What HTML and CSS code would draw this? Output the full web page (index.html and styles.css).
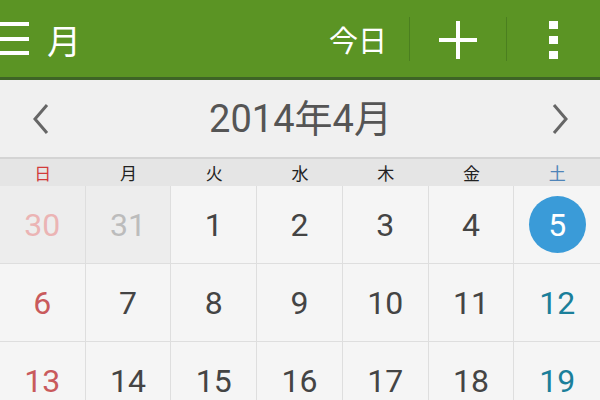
FILE: index.html
```html
<!DOCTYPE html>
<html lang="ja">
<head>
<meta charset="utf-8">
<title>カレンダー</title>
<link rel="stylesheet" href="styles.css">
</head>
<body>
<header class="appbar">
  <div class="menu-icon"><span></span><span></span><span></span></div>
  <div class="title">月</div>
  <div class="spacer"></div>
  <div class="today">今日</div>
  <div class="sep"></div>
  <div class="add">
    <svg width="38" height="38" viewBox="0 0 38 38"><rect x="0" y="17" width="38" height="4" fill="#fff"/><rect x="17" y="0" width="4" height="38" fill="#fff"/></svg>
  </div>
  <div class="sep"></div>
  <div class="more"><span></span><span></span><span></span></div>
</header>
<nav class="monthbar">
  <svg class="chev" width="18" height="32" viewBox="0 0 18 32"><polyline points="15,2 3,16 15,30" fill="none" stroke="#666" stroke-width="3"/></svg>
  <div class="month">2014年4月</div>
  <svg class="chev" width="18" height="32" viewBox="0 0 18 32"><polyline points="3,2 15,16 3,30" fill="none" stroke="#666" stroke-width="3"/></svg>
</nav>
<div class="weekdays">
  <div class="wd sun">日</div>
  <div class="wd">月</div>
  <div class="wd">火</div>
  <div class="wd">水</div>
  <div class="wd">木</div>
  <div class="wd">金</div>
  <div class="wd sat">土</div>
</div>
<div class="grid">
  <div class="cell prev sun-prev">30</div>
  <div class="cell prev">31</div>
  <div class="cell">1</div>
  <div class="cell">2</div>
  <div class="cell">3</div>
  <div class="cell">4</div>
  <div class="cell last"><span class="today-dot">5</span></div>
  <div class="cell sun">6</div>
  <div class="cell">7</div>
  <div class="cell">8</div>
  <div class="cell">9</div>
  <div class="cell">10</div>
  <div class="cell">11</div>
  <div class="cell last sat">12</div>
  <div class="cell sun">13</div>
  <div class="cell">14</div>
  <div class="cell">15</div>
  <div class="cell">16</div>
  <div class="cell">17</div>
  <div class="cell">18</div>
  <div class="cell last sat">19</div>
</div>
</body>
</html>
```
FILE: styles.css
```css
html, body {
  margin: 0;
  padding: 0;
  width: 600px;
  height: 400px;
  overflow: hidden;
  background: #f5f5f5;
  font-family: Roboto, "Noto Sans CJK JP", sans-serif;
}

.appbar {
  height: 77px;
  background: #5b9424;
  border-bottom: 3px solid #3e6426;
  display: flex;
  align-items: center;
  color: #fff;
}

.menu-icon {
  width: 29px;
  height: 33px;
  display: flex;
  flex-direction: column;
  justify-content: space-between;
  margin-right: 18px;
  margin-top: 0;
}
.menu-icon span {
  display: block;
  height: 4px;
  background: #fff;
}

.title {
  font-family: "Noto Sans CJK JP", sans-serif;
  font-size: 34px;
  line-height: 1;
  margin-top: 2px;
}

.spacer { flex: 1; }

.today {
  font-family: "Noto Sans CJK JP", sans-serif;
  font-size: 29px;
  line-height: 1;
  margin-right: 22px;
  margin-top: 2px;
}

.sep {
  width: 1px;
  height: 44px;
  background: #4b7f1f;
}

.add {
  width: 38px;
  height: 38px;
  margin: 2px 29px 0 29px;
}
.add svg { display: block; }

.more {
  width: 9px;
  height: 38px;
  display: flex;
  flex-direction: column;
  justify-content: space-between;
  margin: 2px 42px 0 42px;
}
.more span {
  display: block;
  height: 8px;
  background: #fff;
}

.monthbar {
  height: 77px;
  background: #f0f0f0;
  display: flex;
  align-items: center;
  justify-content: space-between;
  padding: 0 31px 0 32px;
  border-bottom: 2px solid #d4d4d4;
}
.chev { display: block; }
.month {
  font-size: 38px;
  color: #555;
  line-height: 1;
  margin-top: 1px;
}

.weekdays {
  display: grid;
  grid-template-columns: repeat(7, 1fr);
  height: 27px;
  background: #e5e5e5;
  align-items: center;
}
.wd {
  text-align: center;
  font-family: "Noto Sans CJK JP", sans-serif;
  font-size: 17px;
  line-height: 1;
  color: #222;
}
.wd.sun { color: #d23b3b; }
.wd.sat { color: #4f84b8; }

.grid {
  display: grid;
  grid-template-columns: repeat(7, 1fr);
  grid-auto-rows: 78px;
}
.cell {
  background: #f5f5f5;
  border-right: 1px solid #dedede;
  border-bottom: 1px solid #dedede;
  display: flex;
  align-items: center;
  justify-content: center;
  font-size: 32px;
  color: #444;
}
.cell.last { border-right: none; }
.cell.prev { background: #ededed; color: #bcbcbc; }
.cell.sun-prev { color: #ebb4b4; }
.cell.sun { color: #c95a5c; }
.cell.sat { color: #1b7f9a; }

.today-dot {
  width: 57px;
  height: 57px;
  border-radius: 50%;
  background: #3a9bd8;
  color: #fff;
  display: flex;
  align-items: center;
  justify-content: center;
}
```
